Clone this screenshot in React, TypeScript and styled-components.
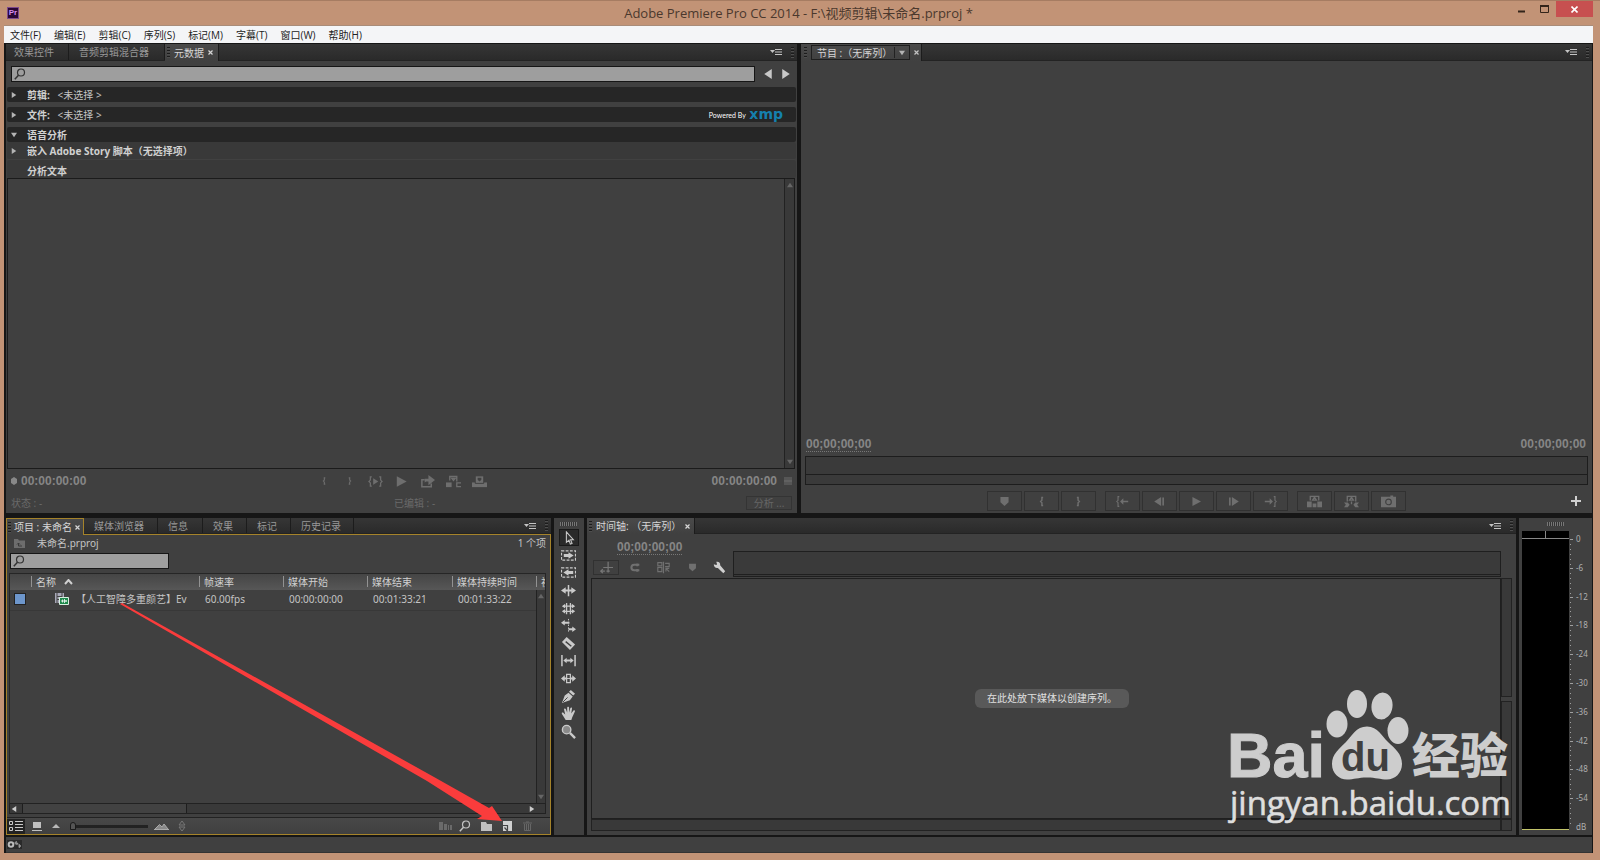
import React from "react";
import styled, { createGlobalStyle } from "styled-components";

const ui = `"Noto Sans", "Noto Sans CJK SC", sans-serif`;

const Global = createGlobalStyle`
  * { box-sizing: border-box; }
  body { margin: 0; background: #c29376; }
  button, input { font: inherit; color: inherit; margin: 0; padding: 0; border: 0; background: none; border-radius: 0; }
  svg { display: block; flex: none; }
`;

/* ---------- window frame ---------- */

const Window = styled.div`
  position: relative;
  display: flex;
  flex-direction: column;
  height: 100vh;
  min-height: 640px;
  padding: 0 7px 7px 4px;
  border-top: 1px solid #a67c62;
  background: #c29376;
  font: 10px/14px ${ui};
  color: #c4c4c4;
  overflow: hidden;
`;

const TitleBar = styled.header`
  display: grid;
  grid-template-columns: 1fr auto 1fr;
  align-items: center;
  height: 25px;
  flex: none;
  border-bottom: 1px solid #a98c79;
`;

const AppLogo = styled.div`
  margin-left: 3px;
  width: 12px;
  height: 12px;
  border: 1px solid #7d4a8c;
  background: #2a0634;
  color: #d58cf0;
  font: 700 8px/10px "Liberation Sans", sans-serif;
  text-align: center;
`;

const Title = styled.h1`
  margin: 0;
  font: 400 13px/20px "Open Sans", "Noto Sans CJK SC", sans-serif;
  color: #4a382d;
`;

const WindowButtons = styled.div`
  display: flex;
  align-self: start;
  justify-content: flex-end;
`;

const WindowButton = styled.button<{ $close?: boolean }>`
  display: grid;
  place-items: center;
  width: ${(p) => (p.$close ? 37 : 23)}px;
  height: 16px;
  background: ${(p) => (p.$close ? "#c75050" : "none")};
`;

const MenuBar = styled.nav`
  display: flex;
  gap: 13px;
  height: 17px;
  flex: none;
  padding-left: 6px;
  background: #f4f5f7;
  color: #222;
  font: 10px/16px "Open Sans", "Noto Sans CJK SC", sans-serif;
`;

const MenuItem = styled.button`
  white-space: nowrap;
`;

const Workspace = styled.main`
  display: flex;
  flex: 1;
  flex-direction: column;
  min-height: 0;
  padding: 1px 1px 0 2px;
  background: #161616;
`;

const TopRow = styled.div`
  display: grid;
  grid-template-columns: minmax(0, 1fr) minmax(0, 1fr);
  gap: 4px;
  flex: 469 1 0;
  min-height: 0;
  margin-bottom: 5px;
`;

const BottomRow = styled.div`
  display: grid;
  grid-template-columns: minmax(0, 545fr) 30px minmax(0, 929fr) 73px;
  gap: 3px;
  flex: 317 1 0;
  min-height: 0;
  margin-bottom: 2px;
`;

const StatusBar = styled.footer`
  display: flex;
  align-items: center;
  height: 16px;
  flex: none;
  background: #404040;
  border-bottom: 1px solid #333;
`;

/* ---------- shared panel parts ---------- */

const Panel = styled.section`
  position: relative;
  display: flex;
  flex-direction: column;
  min-width: 0;
  min-height: 0;
  background: #404040;
`;

const TabBar = styled.div<{ $height?: number }>`
  display: flex;
  height: ${(p) => p.$height ?? 17}px;
  flex: none;
  background: linear-gradient(#363636, #2a2a2a);
  border-bottom: 1px solid #232323;
`;

const TabButton = styled.button<{ $active?: boolean; $focus?: boolean; $width: number; $pad?: number }>`
  position: relative;
  display: flex;
  align-items: center;
  gap: 4px;
  width: ${(p) => p.$width}px;
  height: ${(p) => (p.$active ? "calc(100% + 1px)" : "100%")};
  padding-left: ${(p) => (p.$active ? 2 : p.$pad ?? 10)}px;
  white-space: nowrap;
  color: ${(p) => (p.$active ? "#d6d6d6" : "#989898")};
  background: ${(p) => (p.$active ? "linear-gradient(#4a4a4a, #404040)" : "none")};
  border-right: 1px solid #1c1c1c;
  ${(p) => p.$focus && "border: 1px solid #a5832a; border-bottom: 0; height: calc(100% + 2px); padding-left: 1px; gap: 3px; z-index: 1;"}
`;

const Grip = styled.span`
  width: 3px;
  height: 11px;
  flex: none;
  background: repeating-linear-gradient(#1c1c1c 0 1px, #4e4e4e 1px 2px, transparent 2px 3px);
`;

const TopGrip = styled.span`
  width: 17px;
  height: 4px;
  flex: none;
  background: repeating-linear-gradient(90deg, #777 0 1px, #333 1px 2px);
`;

const TabBarEnd = styled.div`
  display: flex;
  align-items: center;
  margin-left: auto;
  gap: 8px;
  padding-right: 3px;
`;

const IconButton = styled.button<{ $w?: number; $h?: number; $color?: string; $boxed?: boolean }>`
  display: grid;
  place-items: center;
  flex: none;
  width: ${(p) => p.$w ?? 16}px;
  height: ${(p) => p.$h ?? 16}px;
  color: ${(p) => p.$color ?? "#c4c4c4"};
  border: ${(p) => (p.$boxed ? "1px solid #313131" : "0")};
`;

const Timecode = styled.span<{ $underline?: boolean }>`
  font: 700 12px/14px "Liberation Sans", sans-serif;
  color: #868686;
  border-bottom: ${(p) => (p.$underline ? "1px dotted #777" : "0")};
`;

const Spacer = styled.div`
  flex: 1;
`;

const PanelMenu = () => (
  <TabBarEnd>
    <IconButton aria-label="面板菜单" $w={14}>
      <svg width="12" height="8" viewBox="0 0 12 8">
        <path d="M0 2h5L2.500 5z" fill="#c4c4c4" />
        <path d="M5 1.500H12M5 4h7M5 6.500h7" stroke="#c4c4c4" />
      </svg>
    </IconButton>
    <Grip />
  </TabBarEnd>
);

const Close = () => (
  <svg width="5" height="5" viewBox="0 0 5 5">
    <path d="M.5.5l4 4M4.500.5l-4 4" stroke="currentColor" strokeWidth="1.200" />
  </svg>
);

const SearchBox = styled.label<{ $width?: number }>`
  display: flex;
  align-items: center;
  height: 16px;
  ${(p) => (p.$width ? `width: ${p.$width}px;` : "flex: 1;")}
  padding-left: 2px;
  border: 1px solid #161616;
  background: #9e9e9e;
  color: #333;
`;

const SearchInput = styled.input`
  flex: 1;
  min-width: 0;
  outline: 0;
`;

const Magnifier = ({ size = 12 }: { size?: number }) => (
  <svg width={size} height={size} viewBox="0 0 12 12" fill="none" stroke="currentColor">
    <circle cx="7" cy="4.500" r="3.500" strokeWidth="1.200" />
    <path d="M4.500 7.200L.8 11.200" strokeWidth="1.500" />
  </svg>
);

const Triangle = ({ dir, size = 6, color = "#b4b4b4" }: { dir: "up" | "down" | "left" | "right"; size?: number; color?: string }) => {
  const d = { up: "M0 7L4 1l4 6z", down: "M0 1h8L4 7z", left: "M7 0v8L1 4z", right: "M1 0v8l6-4z" }[dir];
  return (
    <svg width={size} height={size} viewBox="0 0 8 8">
      <path d={d} fill={color} />
    </svg>
  );
};

/* ---------- metadata panel ---------- */

const SearchRow = styled.div`
  display: flex;
  align-items: center;
  gap: 5px;
  margin: 5px 3px 5px 5px;
  height: 16px;
`;

const Pager = styled.div`
  display: flex;
  gap: 2px;
`;

const MetaRow = styled.div<{ $tone?: "sub" }>`
  display: flex;
  align-items: center;
  height: ${(p) => (p.$tone ? 18 : 15)}px;
  flex: none;
  margin: 0 1px ${(p) => (p.$tone ? 0 : 5)}px 1px;
  padding: 1px 13px 0 4px;
  background: ${(p) => (p.$tone ? "#393939" : "#262626")};
  border-radius: 2px;
  white-space: pre;
`;

const MetaGroup = styled.div`
  display: flex;
  flex-direction: column;
  ${MetaRow}:first-child { margin-bottom: 0; }
  ${MetaRow}:nth-child(2) { border-bottom: 1px solid #414141; }
  ${MetaRow}:nth-child(3) { padding-top: 4px; }
`;

const Disclosure = styled.button`
  display: flex;
  align-items: center;
  gap: 10px;
  height: 14px;
`;

const MetaLabel = styled.span`
  font-weight: 700;
  color: #d0d0d0;
`;

const Powered = styled.span`
  display: flex;
  align-items: center;
  gap: 2px;
  margin-left: auto;
  color: #fff;
  font: 7px/12px Lato, sans-serif;
`;

const Xmp = styled.b`
  padding-bottom: 2px;
  color: #1580ae;
  font: 700 14px/12px "DejaVu Sans", sans-serif;
`;

const TextArea = styled.div`
  display: flex;
  justify-content: flex-end;
  flex: 1;
  min-height: 0;
  margin: 0 2px 0 1px;
  border: 1px solid #1b1b1b;
`;

const VScroll = styled.div`
  display: flex;
  flex-direction: column;
  align-items: center;
  justify-content: space-between;
  width: 10px;
  padding: 3px 0;
  background: #393939;
  border-left: 1px solid #222;
`;

const Footer = styled.div`
  display: flex;
  flex-direction: column;
  gap: 9px;
  height: 44px;
  flex: none;
  padding: 4px 5px 0 5px;
`;

const FooterLine = styled.div<{ $shift?: boolean }>`
  display: grid;
  grid-template-columns: ${(p) => (p.$shift ? "383px 1fr auto" : "1fr auto 1fr")};
  align-items: center;
  height: 14px;
  color: #6a6a6a;
`;

const Cluster = styled.div<{ $end?: boolean; $gap?: number }>`
  display: flex;
  align-items: center;
  justify-content: ${(p) => (p.$end ? "flex-end" : "flex-start")};
  gap: ${(p) => p.$gap ?? 4}px;
`;

const AnalyzeButton = styled.button`
  width: 46px;
  height: 14px;
  line-height: 12px;
  border: 1px solid #343434;
  color: #666;
`;

const glyphs: Record<string, React.ReactNode> = {
  in: <path d="M10 3H8.500v3.500L7 8l1.500 1.500V13H10" fill="none" stroke="currentColor" strokeWidth="1.800" />,
  out: <path d="M6 3h1.500v3.500L9 8 7.500 9.500V13H6" fill="none" stroke="currentColor" strokeWidth="1.800" />,
  inout: (
    <>
      <path d="M4 3H2.500v3.500L1 8l1.500 1.500V13H4M12 3h1.500v3.500L15 8l-1.500 1.500V13H12" fill="none" stroke="currentColor" strokeWidth="1.300" />
      <path d="M5.500 4.500v7L11 8z" fill="currentColor" />
    </>
  ),
  play: <path d="M3 2.500v11L13.500 8z" fill="currentColor" />,
  exportClip: (
    <>
      <path d="M5 6H2v7.500h10V10" fill="none" stroke="currentColor" strokeWidth="1.600" />
      <path d="M5 9V5h4V1l7 5.500L9 12V8H6.500z" fill="currentColor" />
    </>
  ),
  insert: (
    <>
      <path d="M0 9h6v5H0z" fill="currentColor" />
      <path d="M4 7V2.500h7.500V8M6 4.500h4l-2 2.500z" fill="none" stroke="currentColor" strokeWidth="1.400" />
      <path d="M16 9.500h-4.500v4H16" fill="none" stroke="currentColor" strokeWidth="1.400" />
    </>
  ),
  overwrite: (
    <>
      <path d="M0 9h16v5H0z" fill="currentColor" />
      <path d="M3.500 2h9v8h-9z" fill="currentColor" stroke="#404040" />
      <path d="M6 4h4v2L8 8 6 6z" fill="#404040" />
    </>
  ),
  marker: <path d="M3 2.500h10v6.500L8 13.500 3 9z" fill="currentColor" />,
  toIn: (
    <>
      <path d="M4 2H2.500v4.500L1 8l1.500 1.500V14H4" fill="none" stroke="currentColor" strokeWidth="1.400" />
      <path d="M5 8l4-4v3h6v2H9v3z" fill="currentColor" />
    </>
  ),
  toOut: (
    <>
      <path d="M12 2h1.500v4.500L15 8l-1.500 1.500V14H12" fill="none" stroke="currentColor" strokeWidth="1.400" />
      <path d="M11 8L7 4v3H1v2h6v3z" fill="currentColor" />
    </>
  ),
  back: <path d="M10 2.500v11L1.500 8zM11.500 3h2v10h-2z" fill="currentColor" />,
  forward: <path d="M6 2.500v11L14.500 8zM2.500 3h2v10h-2z" fill="currentColor" />,
  lift: (
    <>
      <path d="M0 8h5v6H0zM11 8h5v6h-5zM6 10h4v4H6z" fill="currentColor" />
      <path d="M3.500 7V2.500h9V7M6 6.500h4L8 3.500z" fill="none" stroke="currentColor" strokeWidth="1.400" />
    </>
  ),
  extract: (
    <>
      <path d="M0 9h4l2 2.500L4 14H0l2-2.500zM16 9h-4l-2 2.500 2 2.500h4l-2-2.500z" fill="currentColor" />
      <path d="M3.500 8V2.500h9V8M6 6.500h4L8 3.500zM8 8v3" fill="none" stroke="currentColor" strokeWidth="1.400" />
    </>
  ),
  camera: (
    <>
      <path d="M0 3h10V1.500h3V3h3v11H0z" fill="currentColor" />
      <circle cx="8" cy="8.500" r="3" fill="none" stroke="#404040" strokeWidth="1.200" />
    </>
  ),
  pointer: <path d="M5 1v12l3-2.500L9.500 15l2-.8L9.800 10H13z" fill="#333" stroke="currentColor" strokeWidth="1.200" />,
  trackFwd: (
    <>
      <path d="M.5 3h15v10H.5z" fill="none" stroke="currentColor" strokeDasharray="3 1.500" strokeWidth="1.300" />
      <path d="M3 6.500h5V4.500L13.500 8 8 11.500v-2H3z" fill="currentColor" />
    </>
  ),
  trackBack: (
    <>
      <path d="M.5 3h15v10H.5z" fill="none" stroke="currentColor" strokeDasharray="3 1.500" strokeWidth="1.300" />
      <path d="M13 6.500H8V4.500L2.500 8 8 11.500v-2h5z" fill="currentColor" />
    </>
  ),
  ripple: <path d="M7.200 2h1.600v5H11V4.500l5 3.500-5 3.500V9H8.800v5H7.200V9H5v2.500L0 8l5-3.500V7h2.200z" fill="currentColor" />,
  rolling: (
    <>
      <path d="M2 5.500h12M2 11h12M6 2v12M10 2v12" stroke="currentColor" strokeWidth="1.300" />
      <path d="M1 5.500L4.500 3v5zM15 5.500L11.500 3v5zM1 11l3.500-2.500v5zM15 11l-3.500-2.500v5z" fill="currentColor" />
    </>
  ),
  rate: (
    <>
      <path d="M0 5l4-3v2h5v2H4v2zM16 12l-4-3v2H8v2h4v2z" fill="currentColor" />
      <path d="M8 1v14" stroke="currentColor" strokeDasharray="1.500 1.500" />
    </>
  ),
  razor: (
    <>
      <path d="M6 1l9 8-5.500 6L1 6.500z" fill="currentColor" />
      <path d="M5 6l6 5" stroke="#404040" strokeWidth="1.400" />
    </>
  ),
  slip: (
    <>
      <path d="M1 2v12M15 2v12" stroke="currentColor" strokeWidth="1.600" />
      <path d="M2.500 8L6 5v2h4V5l3.500 3L10 11V9H6v2z" fill="currentColor" />
    </>
  ),
  slide: (
    <>
      <path d="M0 8l4-3.500V7h8V4.500L16 8l-4 3.500V9H4v2.500z" fill="currentColor" />
      <path d="M6 3.500h4v9H6z" fill="#404040" stroke="currentColor" strokeWidth="1.300" />
      <path d="M6 8h4" stroke="currentColor" />
    </>
  ),
  pen: (
    <>
      <path d="M10.500 1L15 5l-2 2-4.500-4zM8 4l4.500 4-3 4L1 15l3-8z" fill="currentColor" />
      <path d="M2 14l5-5" stroke="#404040" />
    </>
  ),
  hand: (
    <path
      d="M5 15L1 8.500c-.8-1.500 1-2 1.700-1L4.500 9 3.300 4C3 2.500 4.700 2 5.200 3.500L6.600 7V2c0-1.500 2-1.500 2 0v5l1.300-4.500c.4-1.400 2.200-1 1.800.5L10.900 8l2.200-3c.9-1.200 2.300-.2 1.600 1L12 12l-1 3z"
      fill="currentColor"
    />
  ),
  zoom: (
    <>
      <circle cx="6" cy="6" r="4.500" fill="#8a8a8a" stroke="currentColor" strokeWidth="1.500" />
      <path d="M9.500 9.500L15 15" stroke="currentColor" strokeWidth="2.500" />
    </>
  ),
  snapNest: (
    <path d="M1 12.500h5M3.500 10L1 12.500 3.500 15M4 8h12M10 1v13M8 12.500h4" stroke="currentColor" strokeWidth="1.500" fill="none" />
  ),
  magnet: <path d="M15 4H7.500a4 4 0 0 0 0 8H15M12 2v4M12 10v4" fill="none" stroke="currentColor" strokeWidth="3" />,
  linked: (
    <path d="M1 2h5v4H1zM1 8h5v5H1zM8 1v14M10 3h5v4h-5M11 9l4 4M11 13V9h4" fill="none" stroke="currentColor" strokeWidth="1.400" />
  ),
  wrench: <path d="M1 4l3 .8L5 4 4 1c3-.8 5.500 1.500 4.800 4.300L15 12.500 12.700 15 6 8.500C3.500 9.200.8 7 1 4z" fill="currentColor" />,
};

const Glyph = ({ name, size = 12 }: { name: string; size?: number }) => (
  <svg width={size} height={size} viewBox="0 0 16 16">
    {glyphs[name]}
  </svg>
);

const MetadataPanel = () => (
  <Panel>
    <TabBar>
      <TabButton $width={63} $pad={8}>效果控件</TabButton>
      <TabButton $width={96}>音频剪辑混合器</TabButton>
      <TabButton $active $width={54}>
        <Grip />
        元数据
        <Close />
      </TabButton>
      <PanelMenu />
    </TabBar>
    <SearchRow>
      <SearchBox>
        <Magnifier />
        <SearchInput aria-label="搜索元数据" />
      </SearchBox>
      <Pager>
        <IconButton aria-label="上一个"><Triangle dir="left" size={10} color="#c8c8c8" /></IconButton>
        <IconButton aria-label="下一个"><Triangle dir="right" size={10} color="#c8c8c8" /></IconButton>
      </Pager>
    </SearchRow>
    <MetaRow>
      <Disclosure><Triangle dir="right" /><MetaLabel>剪辑:</MetaLabel></Disclosure>{"   <未选择 >"}
    </MetaRow>
    <MetaRow>
      <Disclosure><Triangle dir="right" /><MetaLabel>文件:</MetaLabel></Disclosure>{"   <未选择 >"}
      <Powered>Powered By <Xmp>xmp</Xmp></Powered>
    </MetaRow>
    <MetaGroup>
      <MetaRow>
        <Disclosure><Triangle dir="down" /><MetaLabel>语音分析</MetaLabel></Disclosure>
      </MetaRow>
      <MetaRow $tone="sub">
        <Disclosure><Triangle dir="right" /><MetaLabel>嵌入 Adobe Story 脚本（无选择项）</MetaLabel></Disclosure>
      </MetaRow>
      <MetaRow $tone="sub">
        <Disclosure><Triangle dir="right" color="none" /><MetaLabel>分析文本</MetaLabel></Disclosure>
      </MetaRow>
    </MetaGroup>
    <TextArea>
      <VScroll><Triangle dir="up" color="#666" /><Triangle dir="down" color="#666" /></VScroll>
    </TextArea>
    <Footer>
      <FooterLine>
        <Cluster>
          <svg width="6" height="8" viewBox="0 0 6 8"><path d="M0 2l3-2 3 2v4L3 8 0 6z" fill="#888" /></svg>
          <Timecode>00:00:00:00</Timecode>
        </Cluster>
        <Cluster $gap={10}>
          {["in", "out", "inout", "play", "exportClip", "insert", "overwrite"].map((n) => (
            <IconButton key={n} aria-label={n} $color="#6e6e6e"><Glyph name={n} size={n === "in" || n === "out" ? 10 : 15} /></IconButton>
          ))}
        </Cluster>
        <Cluster $end $gap={7}>
          <Timecode>00:00:00:00</Timecode>
          <svg width="8" height="8" viewBox="0 0 8 8"><path d="M1 0v8M3 0v8M5 0v8M7 0v8M0 4h8" fill="none" stroke="#6c6c6c" /></svg>
        </Cluster>
      </FooterLine>
      <FooterLine $shift>
        <span>状态 : -</span>
        <span>已编辑 : -</span>
        <AnalyzeButton disabled>分析 ...</AnalyzeButton>
      </FooterLine>
    </Footer>
  </Panel>
);

/* ---------- program monitor ---------- */

const ProgramTab = styled.div`
  display: flex;
  align-items: center;
  gap: 4px;
  width: 121px;
  height: 17px;
  padding-left: 3px;
  background: linear-gradient(#4a4a4a, #404040);
  border-right: 1px solid #1c1c1c;
`;

const SequencePicker = styled.button`
  display: flex;
  align-items: center;
  width: 99px;
  height: 15px;
  padding-left: 5px;
  border: 1px solid #1f1f1f;
  color: #d6d6d6;
  white-space: nowrap;
`;

const PickerArrow = styled.span`
  display: grid;
  place-items: center;
  width: 15px;
  height: 11px;
  margin-left: auto;
  border-left: 1px solid #222;
`;

const Canvas = styled.div`
  flex: 1;
  min-height: 0;
`;

const TimeRow = styled.div`
  display: flex;
  justify-content: space-between;
  padding: 0 6px 4px 5px;
`;

const Ruler = styled.div`
  height: 29px;
  margin: 0 4px;
  flex: none;
  border: 1px solid #1d1d1d;
  background: linear-gradient(#3a3a3a 0 17px, #1d1d1d 17px 18px, #3a3a3a 18px);
`;

const Transport = styled.div`
  display: grid;
  grid-template-columns: 1fr auto 1fr;
  align-items: center;
  height: 28px;
  flex: none;
  padding: 4px 8px 0;
`;

const ProgramPanel = () => (
  <Panel>
    <TabBar>
      <ProgramTab>
        <Grip />
        <SequencePicker>
          节目 :（无序列）
          <PickerArrow><Triangle dir="down" size={6} /></PickerArrow>
        </SequencePicker>
        <Close />
      </ProgramTab>
      <PanelMenu />
    </TabBar>
    <Canvas />
    <TimeRow>
      <Timecode $underline>00;00;00;00</Timecode>
      <Timecode>00;00;00;00</Timecode>
    </TimeRow>
    <Ruler />
    <Transport>
      <span />
      <Cluster $gap={9}>
        {[["marker", "in", "out"], ["toIn", "back", "play", "forward", "toOut"], ["lift", "extract", "camera"]].map((group) => (
          <Cluster key={group[0]} $gap={2}>
            {group.map((n) => (
              <IconButton key={n} aria-label={n} $w={35} $h={20} $boxed $color="#6f6f6f"><Glyph name={n} size={n === "lift" || n === "extract" || n === "camera" ? 15 : 13} /></IconButton>
            ))}
          </Cluster>
        ))}
      </Cluster>
      <Cluster $end>
        <IconButton aria-label="按钮编辑器">
          <svg width="10" height="10" viewBox="0 0 10 10"><path d="M5 0v10M0 5h10" stroke="#d0d0d0" strokeWidth="2" /></svg>
        </IconButton>
      </Cluster>
    </Transport>
  </Panel>
);

/* ---------- project panel ---------- */

const ProjectBody = styled.div`
  display: flex;
  flex-direction: column;
  flex: 1;
  min-height: 0;
  border: 1px solid #a5832a;
`;

const PathRow = styled.div`
  display: flex;
  align-items: center;
  height: 18px;
  flex: none;
  padding: 0 4px 2px 7px;
  gap: 12px;
`;

const SearchLine = styled.div`
  padding: 0 3px;
  margin-bottom: 4px;
`;

const TableArea = styled.div`
  position: relative;
  flex: 1;
  min-height: 0;
  margin: 0 4px 0 2px;
  border: 1px solid #262626;
  border-bottom: 0;
  overflow: hidden;
`;

const Table = styled.table`
  width: 100%;
  table-layout: fixed;
  border-collapse: collapse;
`;

const HeadCell = styled.th`
  height: 16px;
  padding: 0 0 0 5px;
  overflow: hidden;
  text-align: left;
  font-weight: 400;
  color: #d0d0d0;
  white-space: nowrap;
  background: linear-gradient(90deg, #929292 0 1px, transparent 1px) 0 2px / 100% 11px no-repeat, linear-gradient(#454545, #575757);
  &:first-child { background: linear-gradient(#454545, #575757); }
`;

const Cell = styled.td`
  height: 20px;
  padding: 0 0 1px 6px;
  overflow: hidden;
  white-space: nowrap;
  border-bottom: 1px solid #383838;
`;

const SortLabel = styled.span`
  display: flex;
  align-items: center;
  gap: 8px;
`;

const ClipName = styled.span`
  display: flex;
  align-items: center;
  gap: 7px;
  padding-left: 18px;
`;

const Swatch = styled.span`
  display: block;
  width: 12px;
  height: 12px;
  margin-left: -2px;
  background: #6d96cb;
  border: 1px solid #222;
`;

const TableScroll = styled(VScroll)`
  position: absolute;
  top: 16px;
  right: 0;
  bottom: 0;
  width: 9px;
`;

const HScroll = styled.div`
  display: flex;
  align-items: center;
  height: 11px;
  flex: none;
  margin: 0 4px 3px 2px;
  border: 1px solid #222;
  background: #393939;
  padding: 0 1px;
`;

const HThumb = styled.div`
  width: 31%;
  height: 9px;
  margin: 0 auto 0 5px;
  border: 1px solid #1e1e1e;
  border-width: 0 1px;
  background: #424242;
`;

const ScrollEnd = styled.span`
  display: flex;
  align-items: center;
  padding-right: 9px;
`;

const ProjectTools = styled.div`
  display: flex;
  align-items: center;
  height: 17px;
  flex: none;
  padding: 0 13px 0 0;
  border-top: 1px solid #222;
  background: linear-gradient(#484848, #404040);
`;

const ViewButton = styled(IconButton)<{ $on?: boolean }>`
  background: ${(p) => (p.$on ? "#222" : "none")};
`;

const Range = styled.input`
  appearance: none;
  width: 78px;
  height: 10px;
  margin: 0 6px 0 6px;
  background: linear-gradient(#222, #222) center / 100% 3px no-repeat;
  &::-webkit-slider-thumb {
    appearance: none;
    width: 6px;
    height: 8px;
    background: #555;
    border: 1px solid #1a1a1a;
    border-radius: 3px 3px 0 0;
  }
`;

const ArrowOverlay = styled.svg`
  position: absolute;
  inset: 0;
  width: 100%;
  height: 100%;
  z-index: 2;
  pointer-events: none;
`;

const columns = ["名称", "帧速率", "媒体开始", "媒体结束", "媒体持续时间", "视频入点"];

const ProjectPanel = () => (
  <Panel>
    <TabBar $height={16}>
      <TabButton $active $focus $width={78}>
        <Grip />
        项目 : 未命名
        <Close />
      </TabButton>
      <TabButton $width={74}>媒体浏览器</TabButton>
      <TabButton $width={45}>信息</TabButton>
      <TabButton $width={44}>效果</TabButton>
      <TabButton $width={44}>标记</TabButton>
      <TabButton $width={63}>历史记录</TabButton>
      <PanelMenu />
    </TabBar>
    <ProjectBody>
      <PathRow>
        <svg width="11" height="9" viewBox="0 0 11 9"><path d="M0 0h4l1 1.500h6V9H0z" fill="#6d6d6d" /><path d="M8 7H4.500V4M3 5.500L4.500 4 6 5.500" fill="none" stroke="#3a3a3a" /></svg>
        <span>未命名.prproj</span>
        <Spacer />
        <span>1 个项</span>
      </PathRow>
      <SearchLine>
        <SearchBox $width={159}>
          <Magnifier />
          <SearchInput aria-label="搜索项目" />
        </SearchBox>
      </SearchLine>
      <TableArea>
        <Table>
          <colgroup>
            <col width="21" />
            <col width="168" />
            <col width="84" />
            <col width="84" />
            <col width="85" />
            <col width="84" />
            <col />
          </colgroup>
          <thead>
            <tr>
              <HeadCell />
              {columns.map((c, i) => (
                <HeadCell key={c} scope="col">
                  {i === 0 ? (
                    <SortLabel>
                      {c}
                      <svg width="9" height="6" viewBox="0 0 9 6"><path d="M1 5l3.500-4L8 5" fill="none" stroke="#d0d0d0" strokeWidth="2" /></svg>
                    </SortLabel>
                  ) : c}
                </HeadCell>
              ))}
            </tr>
          </thead>
          <tbody>
            <tr>
              <Cell><Swatch /></Cell>
              <Cell>
                <ClipName>
                  <svg width="14" height="12" viewBox="0 0 14 12">
                    <path d="M0 0h9v10H0z" fill="#a8a8b8" />
                    <path d="M2 0v10M7 0v5M2 3.500h5M2 6.500h3" stroke="#444" />
                    <path d="M4.500 4.500h9v7h-9z" fill="#1e8a4c" stroke="#d8f0e0" />
                    <path d="M6 8h6M7.500 6.500v3M9.500 6v4M11 7v2" stroke="#fff" strokeWidth=".8" />
                  </svg>
                  <span>【人工智障多重颜艺】Ev</span>
                </ClipName>
              </Cell>
              <Cell>60.00fps</Cell>
              <Cell>00:00:00:00</Cell>
              <Cell>00:01:33:21</Cell>
              <Cell>00:01:33:22</Cell>
              <Cell />
            </tr>
          </tbody>
        </Table>
        <TableScroll><Triangle dir="up" color="#666" /><Triangle dir="down" color="#666" /></TableScroll>
      </TableArea>
      <HScroll>
        <Triangle dir="left" color="#ccc" />
        <HThumb />
        <ScrollEnd><Triangle dir="right" color="#ccc" /></ScrollEnd>
      </HScroll>
      <ProjectTools>
        <ViewButton $on aria-label="列表视图" $w={18} $h={15}>
          <svg width="14" height="10" viewBox="0 0 14 10"><path d="M.5.5h3v3h-3zM.5 6.500h3v3h-3zM6 .5h8M6 3.500h8M6 6.500h8M6 9.500h8" fill="none" stroke="#c8c8c8" /></svg>
        </ViewButton>
        <ViewButton aria-label="图标视图" $w={23}>
          <svg width="10" height="9" viewBox="0 0 10 9"><path d="M1 0h8v6H1zM0 8h10v1H0z" fill="#c0c0c0" /></svg>
        </ViewButton>
        <svg width="16" height="4" viewBox="0 0 16 4"><path d="M4 4l4-4 4 4z" fill="#b8b8b8" /></svg>
        <Range type="range" min="0" max="100" defaultValue="0" aria-label="缩放" />
        <svg width="15" height="7" viewBox="0 0 15 7"><path d="M0 6.500h15M1 6l4.500-4.500L8 4l2-3 4 5" fill="#888" stroke="#aaa" /></svg>
        <IconButton aria-label="排序" $w={26}>
          <svg width="8" height="12" viewBox="0 0 8 12"><path d="M1 5l3-4 3 4zM1 7l3 4 3-4z" fill="none" stroke="#777" /></svg>
        </IconButton>
        <Spacer />
        <IconButton aria-label="自动匹配序列" $w={20} $color="#6a6a6a">
          <svg width="13" height="8" viewBox="0 0 13 8"><path d="M0 0h4v8H0zM5 2h3v6H5zM9 3h1v5H9zM11 3h2v5h-2z" fill="currentColor" /></svg>
        </IconButton>
        <IconButton aria-label="查找" $w={20}><Magnifier size={12} /></IconButton>
        <IconButton aria-label="新建素材箱" $w={22}>
          <svg width="11" height="9" viewBox="0 0 11 9"><path d="M0 0h5l1 2h5v7H0z" fill="#c0c0c0" /></svg>
        </IconButton>
        <IconButton aria-label="新建项" $w={20}>
          <svg width="9" height="10" viewBox="0 0 9 10"><path d="M0 0h9v10H0z" fill="#d0d0d0" /><path d="M0 4.500h4.500V10M1.500 6.500L4.500 10" fill="none" stroke="#444" strokeWidth="1.200" /></svg>
        </IconButton>
        <IconButton aria-label="清除" $w={20} $color="#666">
          <svg width="9" height="10" viewBox="0 0 9 10"><path d="M0 2h9M3 1h3M1.500 3v6.500h6V3M3.500 3v6M5.500 3v6" fill="none" stroke="currentColor" /></svg>
        </IconButton>
      </ProjectTools>
    </ProjectBody>
    <ArrowOverlay viewBox="0 0 545 317" preserveAspectRatio="xMinYMax meet">
      <path d="M114 86L116 85 428 259 483 290 486 288 496 303 471 301 476 298 421 263z" fill="#fa3c3c" />
    </ArrowOverlay>
  </Panel>
);

/* ---------- tool strip ---------- */

const ToolStrip = styled(Panel)`
  align-items: center;
  padding: 4px 1px 0 0;
`;

const ToolList = styled.div`
  display: flex;
  flex-direction: column;
  justify-content: space-between;
  height: 211px;
  margin-top: 3px;
`;

const ToolButton = styled.button<{ $active?: boolean }>`
  display: grid;
  place-items: center;
  width: 20px;
  height: 17px;
  color: #cacaca;
  background: ${(p) => (p.$active ? "#2a2a2a" : "none")};
  border: ${(p) => (p.$active ? "1px solid #1a1a1a" : "0")};
`;

const tools = ["pointer", "trackFwd", "trackBack", "ripple", "rolling", "rate", "razor", "slip", "slide", "pen", "hand", "zoom"];

/* ---------- timeline ---------- */

const TimelineHead = styled.div`
  display: grid;
  grid-template-columns: 146px 1fr;
  height: 43px;
  flex: none;
  margin-right: 15px;
`;

const HeadControls = styled.div`
  display: flex;
  flex-direction: column;
  padding: 5px 0 0 6px;
`;

const TimecodeLine = styled.div`
  display: flex;
  align-items: flex-start;
  padding: 1px 0 0 24px;
  height: 21px;
`;

const HeadRuler = styled.div`
  margin-top: 17px;
  border: 1px solid #1f1f1f;
  background: linear-gradient(#3a3a3a 0 22px, #1f1f1f 22px 23px, #3a3a3a 23px);
`;

const TimelineGrid = styled.div`
  display: grid;
  grid-template-columns: 1fr 11px;
  grid-template-rows: 1fr 12px;
  flex: 1;
  min-height: 0;
  margin: 1px 4px 4px;
`;

const TrackArea = styled.div`
  display: grid;
  place-items: center;
  padding-left: 12px;
  border: 1px solid #1f1f1f;
`;

const DropHint = styled.p`
  margin: 0;
  width: 154px;
  height: 19px;
  border-radius: 6px;
  background: #595959;
  color: #e0e0e0;
  line-height: 18px;
  text-align: center;
`;

const SideScrolls = styled.div`
  display: flex;
  flex-direction: column;
  gap: 4px;
`;

const ScrollBox = styled.div`
  flex: 1;
  border: 1px solid #222;
  background: #393939;
`;

const TimelinePanel = () => (
  <Panel>
    <TabBar $height={16}>
      <TabButton $active $width={108}>
        <Grip />
        时间轴: （无序列）
        <Close />
      </TabButton>
      <PanelMenu />
    </TabBar>
    <TimelineHead>
      <HeadControls>
        <TimecodeLine><Timecode $underline>00;00;00;00</Timecode></TimecodeLine>
        <Cluster $gap={3}>
          <IconButton aria-label="嵌套" $w={26} $h={15} $boxed $color="#777"><Glyph name="snapNest" size={13} /></IconButton>
          <IconButton aria-label="对齐" $w={24} $h={15} $color="#707070"><Glyph name="magnet" size={11} /></IconButton>
          <IconButton aria-label="链接" $w={28} $h={15} $color="#707070"><Glyph name="linked" size={13} /></IconButton>
          <IconButton aria-label="标记" $w={24} $h={15} $color="#707070"><Glyph name="marker" size={11} /></IconButton>
          <IconButton aria-label="设置" $w={24} $h={15} $color="#d0d0d0"><Glyph name="wrench" size={13} /></IconButton>
        </Cluster>
      </HeadControls>
      <HeadRuler />
    </TimelineHead>
    <TimelineGrid>
      <TrackArea><DropHint>在此处放下媒体以创建序列。</DropHint></TrackArea>
      <SideScrolls><ScrollBox /><ScrollBox /></SideScrolls>
      <ScrollBox />
      <ScrollBox />
    </TimelineGrid>
  </Panel>
);

/* ---------- audio meter ---------- */

const MeterPanel = styled(Panel)`
  align-items: center;
  padding: 4px 3px 5px;
`;

const MeterBody = styled.div`
  display: flex;
  flex: 1;
  align-self: stretch;
  min-height: 0;
  margin-top: 5px;
`;

const MeterBars = styled.div`
  width: 47px;
  background: linear-gradient(#888, #888) 23px 0 / 1px 7px no-repeat, linear-gradient(#888, #888) 0 7px / 100% 1px no-repeat, #000;
  border-bottom: 1px solid #c2c46a;
`;

const Scale = styled.ol`
  display: flex;
  flex: 1;
  flex-direction: column;
  margin: 0;
  padding: 8px 0 3px 1px;
  list-style: none;
`;

const ScaleStep = styled.li<{ $last?: boolean }>`
  display: flex;
  gap: 3px;
  flex: ${(p) => (p.$last ? "0 0 0px" : "1")};
  min-height: 0;
  color: #b0b0b0;
  font-size: 8px;
`;

const Ticks = styled.span`
  display: flex;
  flex-direction: column;
  justify-content: space-between;
  width: 3px;
`;

const Tick = styled.i<{ $major?: boolean }>`
  width: ${(p) => (p.$major ? 3 : 1)}px;
  height: 1px;
  margin-bottom: 3px;
  background: #a0a0a0;
`;

const ScaleLabel = styled.span`
  margin-top: -6px;
  line-height: 12px;
  height: 12px;
`;

const steps = ["0", "-6", "-12", "-18", "-24", "-30", "-36", "-42", "-48", "-54"];

/* ---------- watermark ---------- */

const Watermark = styled.svg`
  position: absolute;
  right: 84px;
  bottom: 34px;
  z-index: 3;
  pointer-events: none;
`;

export default function App() {
  return (
    <Window>
      <Global />
      <TitleBar>
        <AppLogo>Pr</AppLogo>
        <Title>Adobe Premiere Pro CC 2014 - F:\视频剪辑\未命名.prproj *</Title>
        <WindowButtons>
          <WindowButton aria-label="最小化">
            <svg width="8" height="8" viewBox="0 0 8 8"><path d="M0 6.500h7" stroke="#33241a" strokeWidth="2" /></svg>
          </WindowButton>
          <WindowButton aria-label="最大化">
            <svg width="9" height="8" viewBox="0 0 9 8"><path d="M.5 1h8v6.500h-8z" fill="none" stroke="#33241a" /><path d="M0 1h9" stroke="#33241a" strokeWidth="2" /></svg>
          </WindowButton>
          <WindowButton $close aria-label="关闭">
            <svg width="7" height="7" viewBox="0 0 7 7"><path d="M.5.5l6 6M6.500.5l-6 6" stroke="#fff" strokeWidth="1.600" /></svg>
          </WindowButton>
        </WindowButtons>
      </TitleBar>
      <MenuBar>
        {["文件(F)", "编辑(E)", "剪辑(C)", "序列(S)", "标记(M)", "字幕(T)", "窗口(W)", "帮助(H)"].map((m) => (
          <MenuItem key={m}>{m}</MenuItem>
        ))}
      </MenuBar>
      <Workspace>
        <TopRow>
          <MetadataPanel />
          <ProgramPanel />
        </TopRow>
        <BottomRow>
          <ProjectPanel />
          <ToolStrip>
            <TopGrip />
            <ToolList>
              {tools.map((t, i) => (
                <ToolButton key={t} aria-label={t} $active={i === 0}><Glyph name={t} size={i === 0 ? 14 : 15} /></ToolButton>
              ))}
            </ToolList>
          </ToolStrip>
          <TimelinePanel />
          <MeterPanel>
            <TopGrip />
            <MeterBody>
              <MeterBars />
              <Scale>
                {steps.map((s) => (
                  <ScaleStep key={s}>
                    <Ticks><Tick $major /><Tick /><Tick /><Tick /><Tick /><Tick /></Ticks>
                    <ScaleLabel>{s}</ScaleLabel>
                  </ScaleStep>
                ))}
                <ScaleStep $last>
                  <Ticks><Tick $major /></Ticks>
                  <ScaleLabel>dB</ScaleLabel>
                </ScaleStep>
              </Scale>
            </MeterBody>
          </MeterPanel>
        </BottomRow>
        <StatusBar>
          <IconButton aria-label="同步状态">
            <svg width="15" height="9" viewBox="0 0 15 9">
              <path d="M0 0h15v9H0z" fill="#2a2a2a" />
              <circle cx="4" cy="4.500" r="2.300" fill="none" stroke="#bbb" strokeWidth="2" />
              <path d="M7.500 3l2-2v4zM9 3h2v2M14 6l-2 2V4zM12 6h-1" fill="#999" stroke="#999" strokeWidth=".5" />
            </svg>
          </IconButton>
        </StatusBar>
      </Workspace>
      <Watermark width="290" height="140" viewBox="1226 686 290 140">
        <g fill="#cdcdcd">
          <ellipse cx="1337" cy="724" rx="10.500" ry="13.500" />
          <ellipse cx="1357" cy="704" rx="10" ry="14" />
          <ellipse cx="1382" cy="706" rx="10.500" ry="13.500" transform="rotate(8 1382 706)" />
          <ellipse cx="1398" cy="730.500" rx="10.500" ry="13.500" />
          <path d="M1367 726.500c11 0 15 10 21 15.500 7 6.500 14 12 14 22 0 9-7 15.500-15 15.500-7 0-11-2-20-2s-13 2-20 2c-8 0-15-6-15-15.500 0-10 7-15 14-22 6-6 10-15.500 21-15.500z" />
          <text x="1227" y="777" fontFamily="'Liberation Sans', sans-serif" fontWeight="700" fontSize="63" stroke="#cdcdcd">Bai</text>
          <text x="1412" y="773" fontFamily="'Noto Sans CJK SC', sans-serif" fontWeight="900" fontSize="48">经验</text>
        </g>
        <text x="1341" y="771" fill="#404040" fontFamily="'Liberation Sans', sans-serif" fontWeight="700" fontSize="40">du</text>
        <text x="1230" y="815" fill="#dedede" fontFamily="'Open Sans', sans-serif" fontWeight="400" stroke="#dedede" strokeWidth=".6" fontSize="33">jingyan.baidu.com</text>
      </Watermark>
    </Window>
  );
}
